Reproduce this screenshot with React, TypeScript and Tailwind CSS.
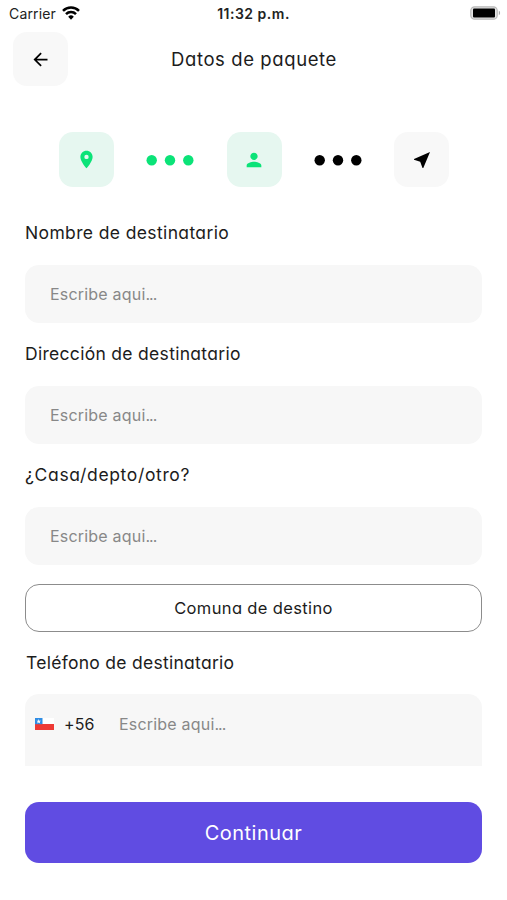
import type { ReactNode } from "react";
import { MdArrowBack, MdLocationOn, MdPerson } from "react-icons/md";

const FIELDS = [
  { label: "Nombre de destinatario", tracking: "tracking-[0.37px]" },
  { label: "Dirección de destinatario", tracking: "tracking-[0.3px]" },
  { label: "¿Casa/depto/otro?", tracking: "tracking-[0.65px]" },
];

function StatusBar() {
  return (
    <div className="grid h-[27px] grid-cols-3 items-center pr-[6px] pl-[9px] text-[14px] text-[#222]">
      <div className="flex items-center gap-[6px]">
        <span className="tracking-[0.15px]">Carrier</span>
        <svg viewBox="0 0 18 14" className="mb-px h-[14px] w-[18px]" fill="none" stroke="#000" strokeWidth="2.5">
          <path d="M1 4.9a11.4 11.4 0 0 1 16 0" />
          <path d="M4 8.2a7 7 0 0 1 10 0" />
          <path d="M9 13.8l-2.8-3.1a4 4 0 0 1 5.6 0z" fill="#000" stroke="none" />
        </svg>
      </div>
      <span className="pr-[3px] text-center font-semibold tracking-[0.5px] whitespace-nowrap">11:32 p.m.</span>
      <svg viewBox="0 0 31 14" className="mb-px h-[14px] w-[31px] justify-self-end">
        <rect x="0.8" y="0.8" width="26.4" height="12.4" rx="3.8" fill="#e4e4e4" stroke="#b8b8b8" strokeWidth="1.2" />
        <rect x="3" y="2.6" width="22" height="8.8" rx="1" fill="#000" />
        <path d="M28.8 4.8c1.7.5 1.7 3.9 0 4.4z" fill="#aaa" />
      </svg>
    </div>
  );
}

function StepBox({ active, children }: { active?: boolean; children: ReactNode }) {
  return (
    <div
      className={`flex size-[55px] items-center justify-center rounded-[14px] ${
        active ? "bg-[#e6f7f0] text-[#0be378]" : "bg-[#f8f8f8] text-black"
      }`}
    >
      {children}
    </div>
  );
}

function Dots({ className }: { className: string }) {
  return (
    <svg viewBox="0 0 48 12" className={`h-3 w-12 ${className}`} fill="currentColor">
      <circle cx="5.7" cy="6.2" r="5.2" />
      <circle cx="24" cy="6.2" r="5.2" />
      <circle cx="42.3" cy="6.2" r="5.2" />
    </svg>
  );
}

function Placeholder() {
  return (
    <span className="text-[16px] tracking-[0.2px] text-[#888] [font-feature-settings:normal]">
      Escribe aqui<span className="tracking-[-1px]">...</span>
    </span>
  );
}

function ChileFlag() {
  return (
    <svg viewBox="0 0 19 12" className="h-3 w-[19px]">
      <rect width="19" height="12" fill="#fff" />
      <rect y="6" width="19" height="6" fill="#ee3a35" />
      <rect width="7.5" height="6.2" fill="#2f8de4" />
      <path d="M3.7 1l.6 1.7h1.7L4.7 3.8l.5 1.7-1.5-1-1.5 1 .5-1.7L1.4 2.7h1.7z" fill="#fff" />
    </svg>
  );
}

export default function App() {
  return (
    <main className="flex h-[900px] w-[507px] flex-col bg-white font-['Inter','Liberation_Sans',sans-serif] text-[#1c1c1c]">
      <StatusBar />

      <header className="mt-[5px] grid grid-cols-[55px_1fr_55px] items-center px-[13px]">
        <button className="flex h-[54px] w-[55px] items-center justify-center rounded-[14px] bg-[#f8f8f8]">
          <MdArrowBack className="size-[21px] text-black" />
        </button>
        <h1 className="pt-[2px] pl-px text-center text-[18.5px] tracking-[0.6px] [font-feature-settings:'cv11']">
          Datos de paquete
        </h1>
      </header>

      <div className="mt-[46px] flex items-center justify-between pr-[58px] pl-[59px]">
        <StepBox active>
          <MdLocationOn className="mr-px size-[21px]" />
        </StepBox>
        <Dots className="text-[#0be378]" />
        <StepBox active>
          <MdPerson className="size-[22px]" />
        </StepBox>
        <Dots className="text-black" />
        <StepBox>
          <svg viewBox="0 0 18 18" className="size-[18px]" fill="currentColor">
            <path d="M17 1L1 8v.8l6.2 2L9.5 17h.8z" />
          </svg>
        </StepBox>
      </div>

      <form className="mt-[31px] flex flex-col px-[25px] [font-feature-settings:'cv11']">
        {FIELDS.map((field) => (
          <div key={field.label} className="mb-[16px]">
            <p className={`h-[30px] text-[17.5px] leading-[30px] whitespace-nowrap ${field.tracking}`}>
              {field.label}
            </p>
            <div className="mt-[17px] flex h-[58px] items-center rounded-[14px] bg-[#f7f7f7] pl-[25px]">
              <Placeholder />
            </div>
          </div>
        ))}

        <button
          type="button"
          className="mt-[3px] h-[48px] rounded-[14px] border-[1.5px] border-[#8c8c8c] text-[16.5px] tracking-[0.36px]"
        >
          Comuna de destino
        </button>

        <p className="mt-[15px] h-[30px] pt-px pl-px text-[17.5px] leading-[30px] tracking-[0.28px]">
          Teléfono de destinatario
        </p>
        <div className="mt-[17px] flex h-[72px] items-center rounded-t-[14px] bg-[#f7f7f7] pb-[13px] pl-[10px]">
          <ChileFlag />
          <span className="ml-[10px] w-[55px] text-[16px] tracking-[0.1px]">+56</span>
          <Placeholder />
        </div>

        <button
          type="button"
          className="mt-[36px] h-[61px] rounded-[14px] bg-[#604ce2] text-[20px] tracking-[0.5px] text-white"
        >
          Continuar
        </button>
      </form>
    </main>
  );
}
